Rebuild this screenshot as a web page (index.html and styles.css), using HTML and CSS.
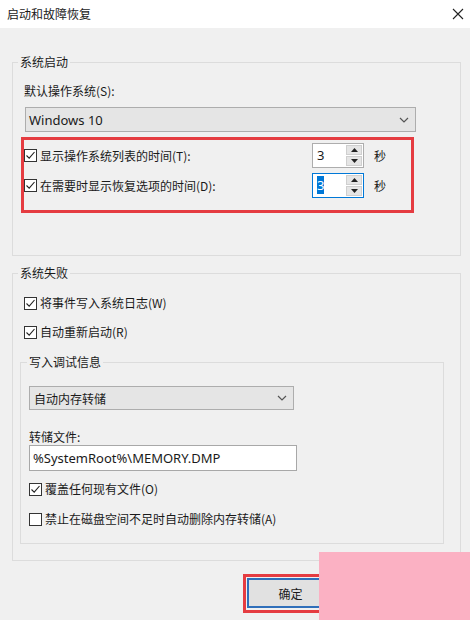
FILE: index.html
```html
<!DOCTYPE html>
<html lang="zh-CN">
<head>
    <meta charset="UTF-8">
    <title>启动和故障恢复</title>
    <link rel="stylesheet" href="styles.css">
</head>
<body>
    <div class="window">
        <div class="titlebar">
            <span class="title">启动和故障恢复</span>
            <svg class="close" width="12" height="12" viewBox="0 0 12 12">
                <path d="M1 1 L11 11 M11 1 L1 11" stroke="#222" stroke-width="1.1" fill="none"/>
            </svg>
        </div>

        <div class="content">
            <div class="group startup">
                <div class="group-title">系统启动</div>
                <div class="field-label">默认操作系统(S):</div>
                <div class="select os-select">
                    <span>Windows 10</span>
                    <svg width="10" height="6" viewBox="0 0 10 6"><path d="M1 1 L5 5 L9 1" stroke="#555" stroke-width="1.2" fill="none"/></svg>
                </div>

                <div class="highlight">
                    <div class="time-row">
                        <label class="check">
                            <svg class="box" width="13" height="13" viewBox="0 0 13 13"><rect x="0.5" y="0.5" width="12" height="12" fill="#fff" stroke="#333"/><path d="M2.5 6.5 L5.2 9.2 L10.5 3" stroke="#222" stroke-width="1.1" fill="none"/></svg>
                            显示操作系统列表的时间(T):
                        </label>
                        <div class="spin">
                            <span class="spin-value">3</span>
                            <div class="spin-btns">
                                <span><svg width="7" height="4" viewBox="0 0 7 4"><path d="M0 4 L3.5 0 L7 4Z" fill="#222"/></svg></span>
                                <span><svg width="7" height="4" viewBox="0 0 7 4"><path d="M0 0 L3.5 4 L7 0Z" fill="#222"/></svg></span>
                            </div>
                        </div>
                        <span class="unit">秒</span>
                    </div>
                    <div class="time-row">
                        <label class="check">
                            <svg class="box" width="13" height="13" viewBox="0 0 13 13"><rect x="0.5" y="0.5" width="12" height="12" fill="#fff" stroke="#333"/><path d="M2.5 6.5 L5.2 9.2 L10.5 3" stroke="#222" stroke-width="1.1" fill="none"/></svg>
                            在需要时显示恢复选项的时间(D):
                        </label>
                        <div class="spin focused">
                            <span class="spin-value"><span class="selected">3</span></span>
                            <div class="spin-btns">
                                <span><svg width="7" height="4" viewBox="0 0 7 4"><path d="M0 4 L3.5 0 L7 4Z" fill="#222"/></svg></span>
                                <span><svg width="7" height="4" viewBox="0 0 7 4"><path d="M0 0 L3.5 4 L7 0Z" fill="#222"/></svg></span>
                            </div>
                        </div>
                        <span class="unit">秒</span>
                    </div>
                </div>
            </div>

            <div class="group failure">
                <div class="group-title">系统失败</div>
                <label class="check first">
                    <svg class="box" width="13" height="13" viewBox="0 0 13 13"><rect x="0.5" y="0.5" width="12" height="12" fill="#fff" stroke="#333"/><path d="M2.5 6.5 L5.2 9.2 L10.5 3" stroke="#222" stroke-width="1.1" fill="none"/></svg>
                    将事件写入系统日志(W)
                </label>
                <label class="check second">
                    <svg class="box" width="13" height="13" viewBox="0 0 13 13"><rect x="0.5" y="0.5" width="12" height="12" fill="#fff" stroke="#333"/><path d="M2.5 6.5 L5.2 9.2 L10.5 3" stroke="#222" stroke-width="1.1" fill="none"/></svg>
                    自动重新启动(R)
                </label>

                <div class="group debug">
                    <div class="group-title">写入调试信息</div>
                    <div class="select dump-select">
                        <span>自动内存转储</span>
                        <svg width="10" height="6" viewBox="0 0 10 6"><path d="M1 1 L5 5 L9 1" stroke="#555" stroke-width="1.2" fill="none"/></svg>
                    </div>
                    <div class="field-label dump-label">转储文件:</div>
                    <div class="text-input">%SystemRoot%\MEMORY.DMP</div>
                    <label class="check overwrite">
                        <svg class="box" width="13" height="13" viewBox="0 0 13 13"><rect x="0.5" y="0.5" width="12" height="12" fill="#fff" stroke="#333"/><path d="M2.5 6.5 L5.2 9.2 L10.5 3" stroke="#222" stroke-width="1.1" fill="none"/></svg>
                        覆盖任何现有文件(O)
                    </label>
                    <label class="check nodelete">
                        <svg class="box" width="13" height="13" viewBox="0 0 13 13"><rect x="0.5" y="0.5" width="12" height="12" fill="#fff" stroke="#333"/></svg>
                        禁止在磁盘空间不足时自动删除内存转储(A)
                    </label>
                </div>
            </div>

            <div class="buttons">
                <div class="btn-mark">
                    <button class="btn">确定</button>
                </div>
            </div>
        </div>

        <div class="cover"></div>
    </div>
</body>
</html>
```

FILE: styles.css
```css
body {
    margin: 0;
    font-family: "Noto Sans", "Noto Sans CJK SC", sans-serif;
    font-size: 12px;
    color: #1a1a1a;
}
.window {
    position: relative;
    width: 470px;
    height: 620px;
    overflow: hidden;
    background: #f0f0f0;
}
.titlebar {
    height: 28px;
    background: #fff;
    display: flex;
    align-items: center;
    justify-content: space-between;
    padding: 0 6px 0 7px;
}
.title {
    font-family: "Noto Sans CJK SC", sans-serif;
    font-size: 12px;
    line-height: 16px;
}
.content {
    padding: 0 9px 0 12px;
}
.group {
    border: 1px solid #dcdcdc;
    padding: 0 0 0 11px;
}
.group-title {
    width: fit-content;
    margin: -9px 0 0 -6px;
    padding: 0 2px;
    line-height: 16px;
    background: #f0f0f0;
    font-family: "Noto Sans CJK SC", sans-serif;
}
.startup {
    margin-top: 34px;
    padding-bottom: 42px;
}
.field-label {
    line-height: 16px;
    margin-top: 13px;
    font-family: "Noto Sans CJK SC", sans-serif;
}
.select {
    box-sizing: border-box;
    display: flex;
    align-items: center;
    justify-content: space-between;
    background: #e5e5e5;
    border: 1px solid #adadad;
    padding: 0 6px 0 3px;
    font-size: 13px;
}
.os-select {
    width: 391px;
    height: 25px;
    margin: 8px 0 0 1px;
}
.highlight {
    width: 393px;
    box-sizing: border-box;
    margin: 5px 0 0 -3px;
    border: 3px solid #e53c41;
    padding: 3px 0 12px 0;
}
.time-row {
    display: grid;
    grid-template-columns: 288px 52px auto;
    align-items: center;
    height: 25px;
}
.time-row + .time-row {
    margin-top: 5px;
}
.check {
    display: flex;
    align-items: center;
    gap: 3px;
    line-height: 16px;
    font-family: "Noto Sans CJK SC", sans-serif;
}
.box {
    flex: none;
}
.spin {
    box-sizing: border-box;
    height: 25px;
    display: flex;
    background: #fff;
    border: 1px solid #adadad;
}
.spin.focused {
    border-color: #0078d7;
}
.spin-value {
    flex: 1;
    padding: 3px 0 0 4px;
    font-size: 13px;
    line-height: 16px;
}
.selected {
    background: #0078d7;
    color: #fff;
}
.spin-btns {
    width: 16px;
    display: flex;
    flex-direction: column;
    gap: 1px;
    padding: 1px 1px 1px 0;
}
.spin-btns span {
    flex: 1;
    display: flex;
    align-items: center;
    justify-content: center;
    background: #e5e5e5;
    border: 1px solid #cfcfcf;
}
.unit {
    margin-left: 10px;
    font-family: "Noto Sans CJK SC", sans-serif;
}
.failure {
    margin-top: 17px;
    padding-bottom: 16px;
}
.failure .first {
    margin-top: 14px;
}
.failure .second {
    margin-top: 13px;
}
.debug {
    width: 424px;
    box-sizing: border-box;
    margin: 22px 0 0 -4px;
    padding: 0 0 16px 8px;
}
.debug .group-title {
    margin-left: -2px;
}
.dump-select {
    width: 265px;
    height: 24px;
    margin-top: 16px;
    padding-left: 4px;
    font-family: "Noto Sans CJK SC", sans-serif;
    font-size: 12px;
}
.dump-label {
    margin-top: 19px;
}
.text-input {
    box-sizing: border-box;
    width: 268px;
    height: 26px;
    line-height: 24px;
    padding-left: 3px;
    background: #fff;
    border: 1px solid #a8a8a8;
    font-size: 13px;
}
.overwrite {
    margin-top: 10px;
}
.nodelete {
    margin-top: 14px;
}
.buttons {
    display: flex;
    margin-top: 13px;
    padding-left: 231px;
}
.btn-mark {
    border: 3px solid #e53c41;
    padding: 1px 1px 2px 1px;
}
.btn {
    width: 87px;
    height: 30px;
    margin: 0;
    background: #e1e1e1;
    border: 2px solid #2f6fba;
    font-family: "Noto Sans CJK SC", sans-serif;
    font-size: 12px;
    color: #1a1a1a;
}
.cover {
    position: absolute;
    left: 319px;
    top: 552px;
    width: 151px;
    height: 68px;
    background: #fbb1c3;
}
```
